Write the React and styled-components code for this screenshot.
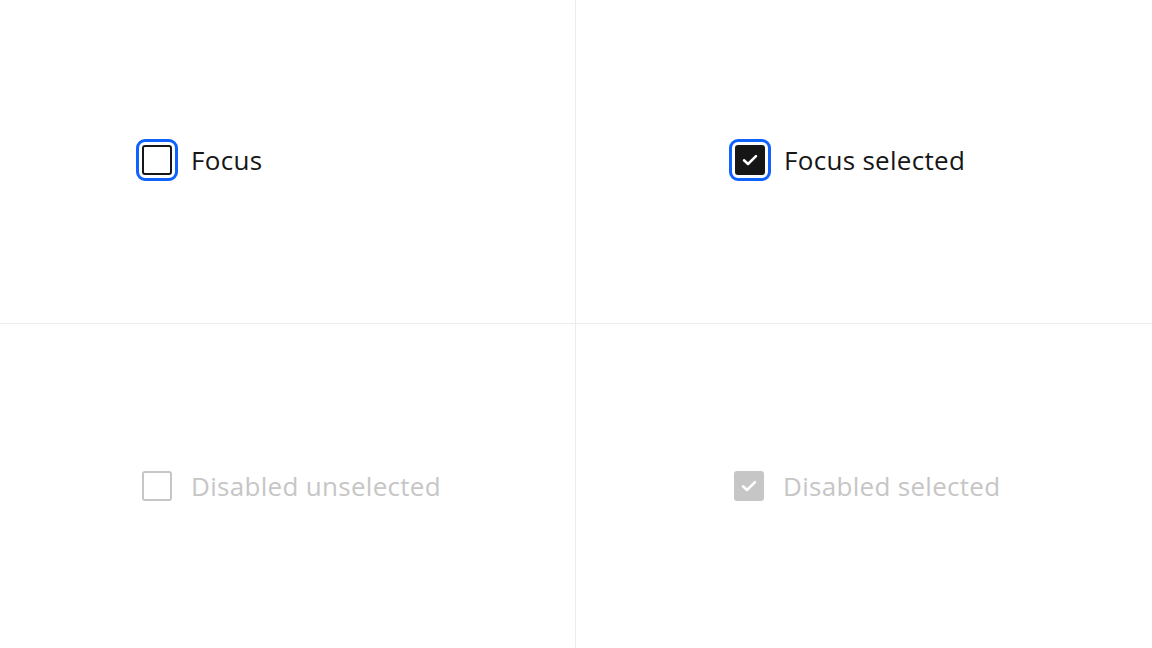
import React from 'react'
import styled, { createGlobalStyle } from 'styled-components'

const GlobalStyle = createGlobalStyle`
  html, body {
    margin: 0;
    padding: 0;
    background: #ffffff;
  }
  body {
    font-family: 'Open Sans', 'Noto Sans', sans-serif;
  }
`

const Grid = styled.div`
  display: grid;
  grid-template-columns: 576px 576px;
  grid-template-rows: 324px 324px;
  width: 1152px;
  height: 648px;
  overflow: hidden;
`

const Cell = styled.div`
  display: flex;
  align-items: center;
  padding-left: ${p => p.$indent}px;
  padding-bottom: ${p => (p.$bottom ? 0 : 3)}px;
  box-sizing: border-box;
  border-right: ${p => (p.$right ? 'none' : '1px solid #ececec')};
  border-bottom: ${p => (p.$bottom ? 'none' : '1px solid #ececec')};
`

const Field = styled.label`
  display: flex;
  align-items: center;
  gap: 19px;
  cursor: ${p => (p.$disabled ? 'not-allowed' : 'pointer')};
`

const Box = styled.span`
  display: flex;
  align-items: center;
  justify-content: center;
  width: 30px;
  height: 30px;
  box-sizing: border-box;
  border-radius: 3px;
  border: 2px solid ${p => (p.$disabled ? '#c6c6c6' : '#161616')};
  background: ${p => (p.$checked ? (p.$disabled ? '#c6c6c6' : '#161616') : '#ffffff')};
  outline: ${p => (p.$focus ? '3px solid #0f62fe' : 'none')};
  outline-offset: 3px;
`

const Label = styled.span`
  font-size: 26px;
  letter-spacing: 0.3px;
  line-height: 1;
  color: ${p => (p.$disabled ? '#c6c6c6' : '#161616')};
`

const Check = () => (
  <svg width="20" height="20" viewBox="0 0 16 16" fill="none">
    <path d="M3.2 8.2 L6.4 11.2 L12.8 4.9" stroke="#ffffff" strokeWidth="2" strokeLinecap="round" strokeLinejoin="round" />
  </svg>
)

const Checkbox = ({ label, checked, focus, disabled }) => (
  <Field $disabled={disabled}>
    <Box $checked={checked} $focus={focus} $disabled={disabled}>
      {checked && <Check />}
    </Box>
    <Label $disabled={disabled}>{label}</Label>
  </Field>
)

export default function App() {
  return (
    <>
      <GlobalStyle />
      <Grid>
        <Cell $indent={142}>
          <Checkbox label="Focus" focus />
        </Cell>
        <Cell $indent={159} $right>
          <Checkbox label="Focus selected" focus checked />
        </Cell>
        <Cell $indent={142} $bottom>
          <Checkbox label="Disabled unselected" disabled />
        </Cell>
        <Cell $indent={158} $right $bottom>
          <Checkbox label="Disabled selected" disabled checked />
        </Cell>
      </Grid>
    </>
  )
}
